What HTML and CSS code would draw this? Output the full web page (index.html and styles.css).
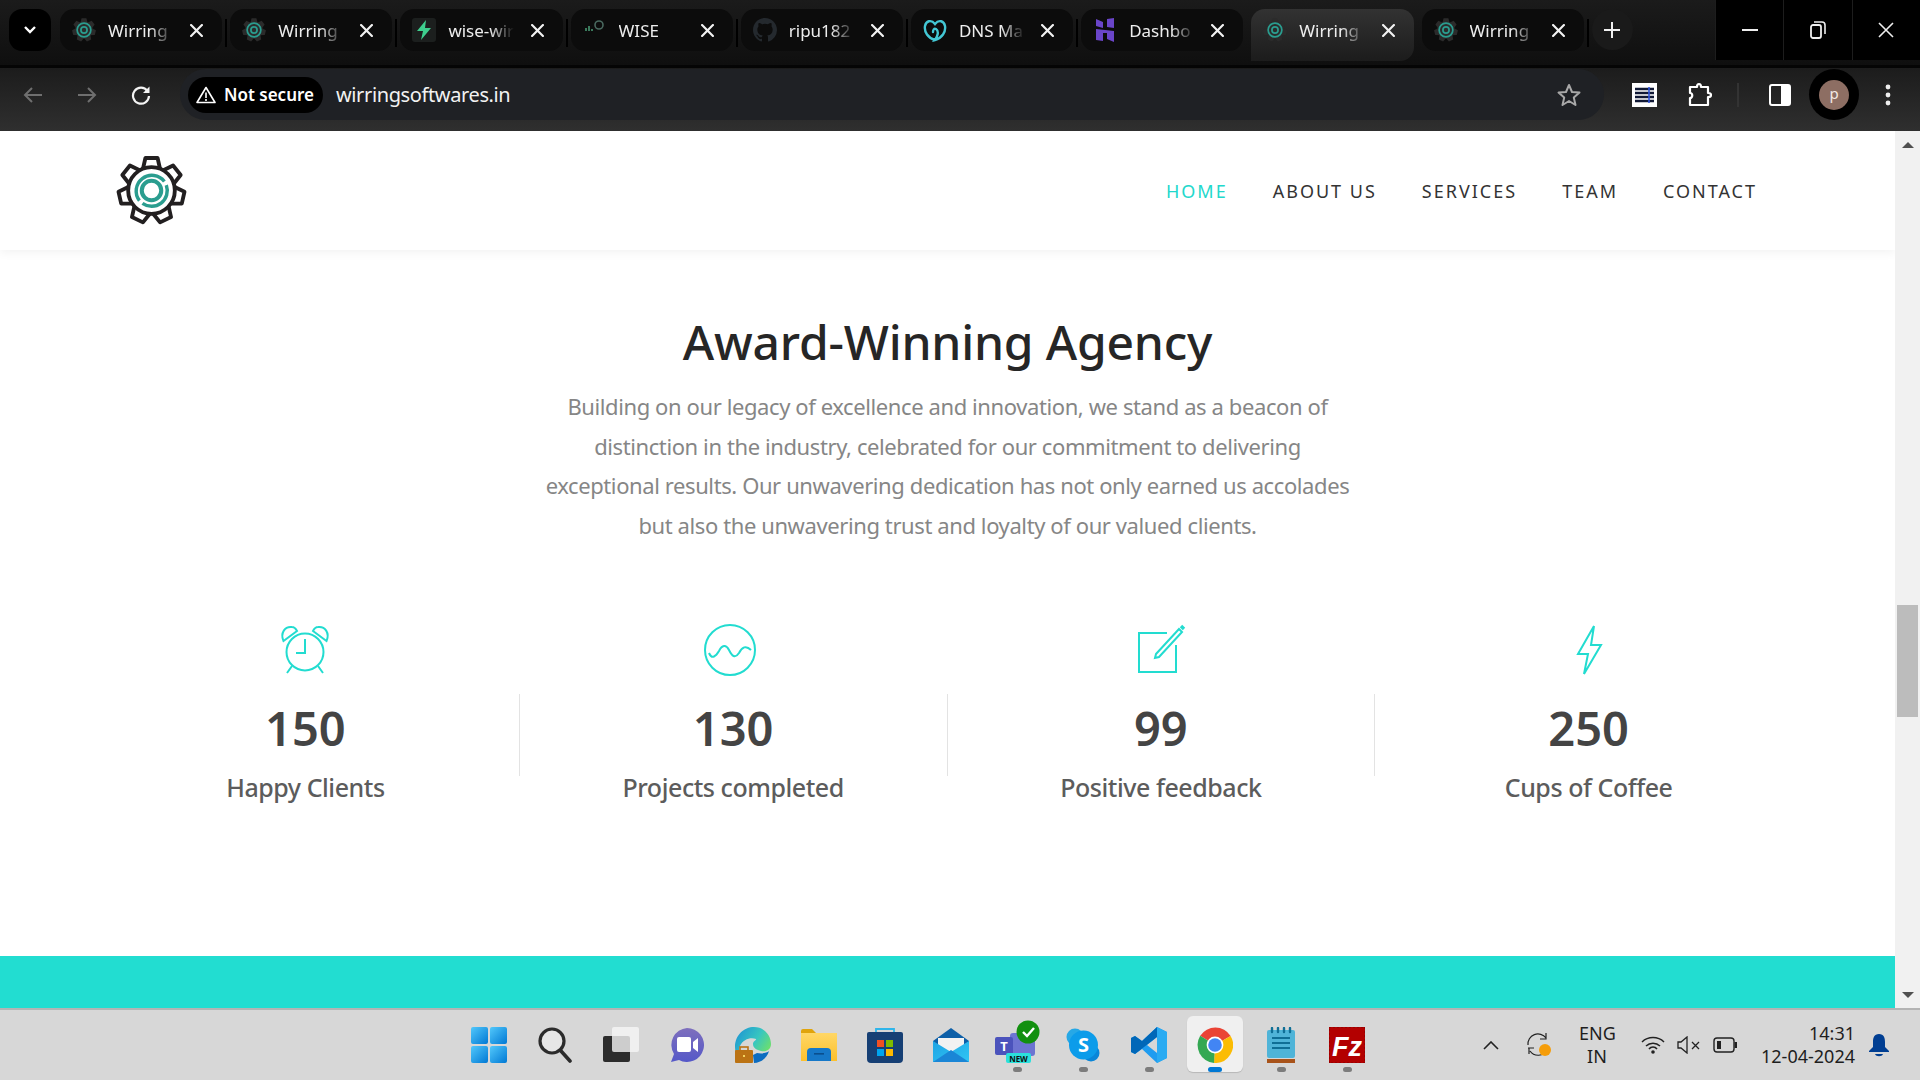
FILE: index.html
```html
<!DOCTYPE html>
<html lang="en">
<head>
    <meta charset="UTF-8">
    <title>Wirring Softwares</title>
    <link rel="stylesheet" href="styles.css">
</head>
<body>
    <svg class="defs" width="0" height="0" aria-hidden="true">
        <defs>
            <symbol id="gear" viewBox="0 0 70 70">
                <g fill="none" stroke="#221f20" stroke-width="3.8" stroke-linejoin="round">
                    <path id="tooth" d="M26.5 14 L29 3 H41 L43.5 14 Z"/>
                    <use href="#tooth" transform="rotate(51.43 35 35)"/>
                    <use href="#tooth" transform="rotate(102.86 35 35)"/>
                    <use href="#tooth" transform="rotate(154.29 35 35)"/>
                    <use href="#tooth" transform="rotate(205.71 35 35)"/>
                    <use href="#tooth" transform="rotate(257.14 35 35)"/>
                    <use href="#tooth" transform="rotate(308.57 35 35)"/>
                    <circle cx="35" cy="35" r="23" fill="#fff"/>
                </g>
                <circle cx="35" cy="35" r="9.6" fill="none" stroke="#2a9d8f" stroke-width="4"/>
                <path d="M49.6 29.7 A15.5 15.5 0 0 1 26.1 47.7 M23.1 45 A15.5 15.5 0 1 1 47.7 26.1" fill="none" stroke="#2a9d8f" stroke-width="3.4"/>
            </symbol>
            <symbol id="gear-dim" viewBox="0 0 70 70">
                <g fill="#2b2b2b">
                    <path id="tooth-dim" d="M24 16 L28 1 H42 L46 16 Z"/>
                    <use href="#tooth-dim" transform="rotate(51.43 35 35)"/>
                    <use href="#tooth-dim" transform="rotate(102.86 35 35)"/>
                    <use href="#tooth-dim" transform="rotate(154.29 35 35)"/>
                    <use href="#tooth-dim" transform="rotate(205.71 35 35)"/>
                    <use href="#tooth-dim" transform="rotate(257.14 35 35)"/>
                    <use href="#tooth-dim" transform="rotate(308.57 35 35)"/>
                    <circle cx="35" cy="35" r="25"/>
                </g>
                <circle cx="35" cy="35" r="20" fill="none" stroke="#2a9d8f" stroke-width="5"/>
                <circle cx="35" cy="35" r="9" fill="none" stroke="#2a9d8f" stroke-width="5"/>
            </symbol>
            <symbol id="close" viewBox="0 0 12 12">
                <path d="M1 1 L11 11 M11 1 L1 11" stroke="#f2f2f2" stroke-width="2" stroke-linecap="round"/>
            </symbol>
            <linearGradient id="win-grad" x1="0" y1="0" x2="1" y2="1">
                <stop offset="0" stop-color="#52c8fb"/>
                <stop offset="1" stop-color="#0078d4"/>
            </linearGradient>
            <linearGradient id="meet-grad" x1="0" y1="0" x2="0" y2="1">
                <stop offset="0" stop-color="#7e6fbd"/>
                <stop offset="1" stop-color="#5558c8"/>
            </linearGradient>
            <linearGradient id="edge-grad" x1="0" y1="0" x2="1" y2="0.6">
                <stop offset="0" stop-color="#1a8fd6"/>
                <stop offset="0.6" stop-color="#38c6c0"/>
                <stop offset="1" stop-color="#6fe06a"/>
            </linearGradient>
            <linearGradient id="folder-grad" x1="0" y1="0" x2="0" y2="1">
                <stop offset="0" stop-color="#ffd766"/>
                <stop offset="1" stop-color="#fcc02c"/>
            </linearGradient>
            <linearGradient id="mail-grad" x1="0" y1="0" x2="1" y2="1">
                <stop offset="0" stop-color="#1ea3e4"/>
                <stop offset="1" stop-color="#30c6f4"/>
            </linearGradient>
        </defs>
    </svg>

    <div class="tabstrip">
        <button class="tab-search">
            <svg width="14" height="10" viewBox="0 0 14 10"><path d="M2 2 L7 7 L12 2" fill="none" stroke="#fff" stroke-width="2.4"/></svg>
        </button>
        <div class="tabs">
            <div class="tab"><svg class="favicon"><use href="#gear-dim"/></svg><span class="tab-title">Wirring</span><svg class="tab-close"><use href="#close"/></svg></div>
            <i class="tab-sep"></i>
            <div class="tab"><svg class="favicon"><use href="#gear-dim"/></svg><span class="tab-title">Wirring</span><svg class="tab-close"><use href="#close"/></svg></div>
            <i class="tab-sep"></i>
            <div class="tab">
                <svg class="favicon" viewBox="0 0 24 24"><rect width="24" height="24" rx="3" fill="#1c1f1e"/><path d="M14 2 L5 13 H11 L9 22 L19 10 H13 Z" fill="#3ecf8e"/></svg>
                <span class="tab-title">wise-wir</span><svg class="tab-close"><use href="#close"/></svg>
            </div>
            <i class="tab-sep"></i>
            <div class="tab">
                <svg class="favicon" viewBox="0 0 24 24"><path d="M3 10 V13 M6 8 V13 M9 11 V13" stroke="#3a7a5c" stroke-width="2"/><circle cx="16" cy="7" r="4" fill="none" stroke="#4a6a60" stroke-width="1.6"/></svg>
                <span class="tab-title">WISE</span><svg class="tab-close"><use href="#close"/></svg>
            </div>
            <i class="tab-sep"></i>
            <div class="tab">
                <svg class="favicon" viewBox="0 0 16 16"><path fill="#24292e" d="M8 0C3.58 0 0 3.58 0 8c0 3.54 2.29 6.53 5.47 7.59.4.07.55-.17.55-.38v-1.34c-2.23.48-2.7-1.07-2.7-1.07-.36-.93-.89-1.17-.89-1.17-.73-.5.05-.49.05-.49.8.06 1.23.83 1.23.83.71 1.23 1.87.87 2.33.66.07-.52.28-.87.5-1.07-1.78-.2-3.64-.89-3.64-3.95 0-.87.31-1.59.82-2.15-.08-.2-.36-1.02.08-2.12 0 0 .67-.21 2.2.82a7.6 7.6 0 0 1 4 0c1.53-1.04 2.2-.82 2.2-.82.44 1.1.16 1.92.08 2.12.51.56.82 1.27.82 2.15 0 3.07-1.87 3.75-3.65 3.95.29.25.54.73.54 1.48v2.2c0 .21.15.46.55.38A8 8 0 0 0 16 8c0-4.42-3.58-8-8-8z"/></svg>
                <span class="tab-title">ripu182</span><svg class="tab-close"><use href="#close"/></svg>
            </div>
            <i class="tab-sep"></i>
            <div class="tab">
                <svg class="favicon" viewBox="0 0 24 24"><path d="M12 22 C5 20 1 14 2 8 C3 3 8 1 12 6 C16 1 21 3 22 8 C23 14 19 20 12 22 C15 18 16 13 13 11 C11 10 10 12 10 14" fill="none" stroke="#43c7d4" stroke-width="2.4" stroke-linecap="round"/></svg>
                <span class="tab-title">DNS Ma</span><svg class="tab-close"><use href="#close"/></svg>
            </div>
            <i class="tab-sep"></i>
            <div class="tab">
                <svg class="favicon" viewBox="0 0 24 24"><path d="M3 1 L10 4 V10 L3 8 Z M14 1 L21 0 V10 L14 9 Z M3 11 L21 13 V24 L14 21 V15 H10 V23 L3 22 Z" fill="#6a45c9"/></svg>
                <span class="tab-title">Dashbo</span><svg class="tab-close"><use href="#close"/></svg>
            </div>
            <i class="tab-sep tab-sep-hidden"></i>
            <div class="tab tab-active"><svg class="favicon"><use href="#gear-dim"/></svg><span class="tab-title">Wirring</span><svg class="tab-close"><use href="#close"/></svg></div>
            <i class="tab-sep tab-sep-hidden"></i>
            <div class="tab"><svg class="favicon"><use href="#gear-dim"/></svg><span class="tab-title">Wirring</span><svg class="tab-close"><use href="#close"/></svg></div>
            <i class="tab-sep"></i>
            <button class="tab-new">
                <svg width="16" height="16" viewBox="0 0 16 16"><path d="M8 0 V16 M0 8 H16" stroke="#f0f0f0" stroke-width="2"/></svg>
            </button>
        </div>
        <div class="window-controls">
            <div class="win-btn"><svg width="16" height="2" viewBox="0 0 16 2"><rect width="16" height="2" fill="#eee"/></svg></div>
            <div class="win-btn"><svg width="16" height="18" viewBox="0 0 16 18"><rect x="1" y="4" width="10" height="13" rx="2" fill="none" stroke="#eee" stroke-width="1.8"/><path d="M4 1 H12 Q15 1 15 4 V13" fill="none" stroke="#eee" stroke-width="1.6"/></svg></div>
            <div class="win-btn"><svg width="16" height="16" viewBox="0 0 16 16"><path d="M1 1 L15 15 M15 1 L1 15" stroke="#eee" stroke-width="1.6"/></svg></div>
        </div>
    </div>

    <div class="toolbar">
        <div class="nav-btn"><svg width="20" height="18" viewBox="0 0 20 18"><path d="M19 9 H2 M9 2 L2 9 L9 16" fill="none" stroke="#6f6f6f" stroke-width="2"/></svg></div>
        <div class="nav-btn"><svg width="20" height="18" viewBox="0 0 20 18"><path d="M1 9 H18 M11 2 L18 9 L11 16" fill="none" stroke="#6f6f6f" stroke-width="2"/></svg></div>
        <div class="nav-btn"><svg width="20" height="20" viewBox="0 0 20 20"><path d="M16.5 6 A8 8 0 1 0 18 11" fill="none" stroke="#f4f4f4" stroke-width="2.2"/><path d="M18.5 1.5 V8 H12 Z" fill="#f4f4f4"/></svg></div>
        <div class="omnibox">
            <div class="not-secure">
                <svg width="20" height="18" viewBox="0 0 20 18"><path d="M10 1.5 L19 16.5 H1 Z" fill="none" stroke="#fff" stroke-width="1.6" stroke-linejoin="round"/><path d="M10 6.5 V12 M10 13 V15" stroke="#fff" stroke-width="1.6"/></svg>
                <span>Not secure</span>
            </div>
            <span class="url">wirringsoftwares.in</span>
            <svg class="star" width="24" height="24" viewBox="0 0 24 24"><path d="M12 2 L15 9 L22.5 9.6 L16.8 14.6 L18.5 22 L12 18 L5.5 22 L7.2 14.6 L1.5 9.6 L9 9 Z" fill="none" stroke="#a8a8a8" stroke-width="2" stroke-linejoin="round"/></svg>
        </div>
        <div class="toolbar-icons">
            <svg class="ext-list" width="25" height="24" viewBox="0 0 25 24">
                <rect width="25" height="24" fill="#fff"/>
                <path d="M3 6 H22 M3 10 H22 M3 14 H22 M3 18 H22" stroke="#111936" stroke-width="2.4"/>
                <path d="M17 4 V20" stroke="#2f55e0" stroke-width="1.6"/>
            </svg>
            <svg class="ext-puzzle" width="25" height="26" viewBox="0 0 25 26">
                <path d="M3 5 H10 C10 1 14 1 14 5 H21 V11 C25 11 25 15 21 15 V23 H3 V16 C6 16 6 11 3 11 Z" fill="none" stroke="#fff" stroke-width="2.2" stroke-linejoin="round"/>
            </svg>
            <i class="toolbar-sep"></i>
            <svg class="side-panel" width="22" height="22" viewBox="0 0 22 22">
                <rect x="1" y="1" width="20" height="20" rx="2" fill="none" stroke="#fff" stroke-width="2"/>
                <rect x="12" y="1" width="9" height="20" fill="#fff"/>
            </svg>
            <div class="avatar-wrap"><div class="avatar">p</div></div>
            <svg class="kebab" width="6" height="22" viewBox="0 0 6 22">
                <circle cx="3" cy="3" r="2.4" fill="#eee"/><circle cx="3" cy="11" r="2.4" fill="#eee"/><circle cx="3" cy="19" r="2.4" fill="#eee"/>
            </svg>
        </div>
    </div>

    <div class="viewport">
        <div class="page">
            <header class="site-header">
                <svg class="logo" width="71" height="71"><use href="#gear"/></svg>
                <nav class="site-nav">
                    <a class="nav-active">HOME</a>
                    <a>ABOUT US</a>
                    <a>SERVICES</a>
                    <a>TEAM</a>
                    <a>CONTACT</a>
                </nav>
            </header>

            <section class="intro">
                <h1>Award-Winning Agency</h1>
                <p>Building on our legacy of excellence and innovation, we stand as a beacon of distinction in the industry, celebrated for our commitment to delivering exceptional results. Our unwavering dedication has not only earned us accolades but also the unwavering trust and loyalty of our valued clients.</p>
            </section>

            <section class="stats">
                <div class="stat">
                    <svg class="stat-icon" viewBox="0 0 52 52">
                        <circle cx="26" cy="28" r="18.5"/>
                        <path d="M26 15 V29 H17"/>
                        <path d="M4.5 17 C1 9 6 2 13 3 C15 3 17 5 18 7 Z"/>
                        <path d="M47.5 17 C51 9 46 2 39 3 C37 3 35 5 34 7 Z"/>
                        <path d="M13 42 L8 49 M39 42 L44 49"/>
                    </svg>
                    <div class="stat-num">150</div>
                    <div class="stat-label">Happy Clients</div>
                </div>
                <i class="stat-divider"></i>
                <div class="stat">
                    <svg class="stat-icon stat-icon-shift" viewBox="0 0 52 52">
                        <circle cx="26" cy="26" r="25"/>
                        <path d="M5 29 C8 36 12 32 15 27 C18 21 22 20 25 26 C28 32 31 35 35 29 C38 23 42 21 47 26"/>
                    </svg>
                    <div class="stat-num">130</div>
                    <div class="stat-label">Projects completed</div>
                </div>
                <i class="stat-divider"></i>
                <div class="stat">
                    <svg class="stat-icon" viewBox="0 0 52 52">
                        <path d="M32 9 H4 V48 H41 V21"/>
                        <path d="M21 30 L44 5 L47 8 L24 33 L20 34 Z"/>
                        <path d="M46 2 L49 5" stroke-width="3.4"/>
                    </svg>
                    <div class="stat-num">99</div>
                    <div class="stat-label">Positive feedback</div>
                </div>
                <i class="stat-divider"></i>
                <div class="stat">
                    <svg class="stat-icon" viewBox="0 0 52 52">
                        <path d="M31 2 L15 30 H25 L21 50 L38 21 H28 Z"/>
                    </svg>
                    <div class="stat-num">250</div>
                    <div class="stat-label">Cups of Coffee</div>
                </div>
            </section>

            <div class="band"></div>
        </div>
        <div class="scrollbar">
            <span class="arrow-up"></span>
            <div class="track"><div class="thumb"></div></div>
            <span class="arrow-down"></span>
        </div>
    </div>

    <footer class="taskbar">
        <div class="task-icons">
            <div class="task-item">
                <svg width="36" height="36" viewBox="0 0 36 36"><rect x="0" y="0" width="17" height="17" rx="2" fill="url(#win-grad)"/><rect x="19" y="0" width="17" height="17" rx="2" fill="url(#win-grad)"/><rect x="0" y="19" width="17" height="17" rx="2" fill="url(#win-grad)"/><rect x="19" y="19" width="17" height="17" rx="2" fill="url(#win-grad)"/></svg>
            </div>
            <div class="task-item">
                <svg width="34" height="36" viewBox="0 0 34 36"><circle cx="14" cy="14" r="12" fill="#e6e6e6" stroke="#2b2b2b" stroke-width="3.2"/><path d="M23 24 L32 34" stroke="#2b2b2b" stroke-width="3.6" stroke-linecap="round"/></svg>
            </div>
            <div class="task-item">
                <svg width="36" height="36" viewBox="0 0 36 36"><rect x="0" y="9" width="27" height="26" rx="2" fill="#2c2c2c"/><rect x="9" y="0" width="27" height="25" rx="2" fill="#f6f6f6" fill-opacity=".8"/></svg>
            </div>
            <div class="task-item">
                <svg width="34" height="36" viewBox="0 0 34 36"><path d="M17 1 A17 17 0 1 1 9 33 L1 35 L4 27 A17 17 0 0 1 17 1 Z" fill="url(#meet-grad)"/><rect x="7" y="10" width="14" height="15" rx="2" fill="#fff"/><path d="M23 15 L28 11 V25 L23 21 Z" fill="#fff"/></svg>
            </div>
            <div class="task-item">
                <svg width="36" height="36" viewBox="0 0 36 36"><path d="M0 20 C0 8 9 0 19 0 C29 0 36 8 36 17 C36 23 31 25 26 24 C22 23 18 21 18 17 C18 14 22 13 21 12 C16 10 8 12 5 19 C3 24 4 30 8 34 C3 31 0 26 0 20 Z" fill="url(#edge-grad)"/><path d="M22 26 C27 27 32 26 34 24 C32 31 26 36 19 36 L18 28 Z" fill="#0c6cc0"/><rect x="0" y="23" width="18" height="13" rx="1" fill="#bb7314"/><rect x="5" y="20" width="8" height="4" fill="none" stroke="#bb7314" stroke-width="1.6"/><rect x="8" y="28" width="2" height="2" fill="#f4d35e"/></svg>
            </div>
            <div class="task-item">
                <svg width="36" height="32" viewBox="0 0 36 32"><path d="M0 2 Q0 0 2 0 H11 L15 4 H36 V10 H0 Z" fill="#e0a40c"/><rect x="0" y="4" width="36" height="28" fill="url(#folder-grad)"/><path d="M6 32 V23 Q6 19 10 19 H26 Q30 19 30 23 V32 Z" fill="#1678c8"/><rect x="13" y="24" width="10" height="1.6" fill="#0a4f8e"/></svg>
            </div>
            <div class="task-item">
                <svg width="36" height="36" viewBox="0 0 36 36"><path d="M9 6 V2 H27 V6" fill="none" stroke="#2fb5ea" stroke-width="1.8"/><path d="M0 7 Q0 5 2 5 H34 Q36 5 36 7 V32 Q36 36 32 36 H4 Q0 36 0 32 Z" fill="#163f74"/><rect x="10" y="13" width="7" height="7" fill="#f25022"/><rect x="19" y="13" width="7" height="7" fill="#7fba00"/><rect x="10" y="22" width="7" height="7" fill="#00a4ef"/><rect x="19" y="22" width="7" height="7" fill="#ffb900"/></svg>
            </div>
            <div class="task-item">
                <svg width="36" height="34" viewBox="0 0 36 34"><path d="M18 0 L36 13 V34 H0 V13 Z" fill="#0d5fa8"/><path d="M5 10 H31 V20 L18 27 L5 20 Z" fill="#f2f2f2"/><path d="M0 13 L18 24 L36 13 V34 H0 Z" fill="url(#mail-grad)"/><path d="M0 34 L18 22 L36 34 Z" fill="#1a86d6"/></svg>
            </div>
            <div class="task-item has-dot">
                <svg class="teams" width="46" height="46" viewBox="0 0 46 46"><circle cx="31" cy="17" r="6" fill="#7b83d8"/><rect x="16" y="13" width="25" height="23" rx="3" fill="#6d74d2"/><rect x="1" y="17" width="18" height="18" rx="2" fill="#4b53bc"/><text x="10" y="31" class="teams-t">T</text><circle cx="34" cy="12" r="11.5" fill="#12900f"/><path d="M29 12 L33 16 L40 8" fill="none" stroke="#fff" stroke-width="2.4"/><rect x="12" y="33" width="25" height="10" rx="2" fill="#2ae0dc"/><text x="24.5" y="41.5" class="teams-new">NEW</text></svg>
                <i class="task-dot"></i>
            </div>
            <div class="task-item has-dot">
                <svg width="34" height="34" viewBox="0 0 34 34"><circle cx="9" cy="9" r="8.5" fill="#26a8e6"/><circle cx="25" cy="25" r="8.5" fill="#0a86d8"/><circle cx="17.5" cy="17" r="14.5" fill="#0c9cea"/><text x="17.5" y="24" class="skype-s">S</text></svg>
                <i class="task-dot"></i>
            </div>
            <div class="task-item has-dot">
                <svg width="36" height="36" viewBox="0 0 36 36"><path d="M26 0 L36 5 V31 L26 36 L11 22 L4 27 L0 25 V11 L4 9 L11 14 Z M26 10 L16 18 L26 26 Z" fill="#1f9cf0" fill-rule="evenodd"/><path d="M26 0 L11 14 L4 9 L0 11 V25 L4 27 L26 10 Z" fill="#0067b8"/><path d="M26 0 L36 5 V31 L26 36 Z" fill="#2aabf2"/></svg>
                <i class="task-dot"></i>
            </div>
            <div class="task-item task-item-active">
                <svg width="36" height="36" viewBox="0 0 36 36">
                    <path d="M18 18 L3.2 8.7 A18 18 0 0 1 33.6 9 Z" fill="#ea4335"/>
                    <path d="M18 18 L33.6 9 A18 18 0 0 1 17 36 Z" fill="#fbbc04"/>
                    <path d="M18 18 L17 36 A18 18 0 0 1 3.2 8.7 Z" fill="#34a853"/>
                    <circle cx="18" cy="18" r="8.4" fill="#fff"/><circle cx="18" cy="18" r="6.8" fill="#4285f4"/>
                </svg>
                <i class="task-dot task-dot-active"></i>
            </div>
            <div class="task-item has-dot">
                <svg width="28" height="36" viewBox="0 0 28 36"><rect x="0" y="3" width="28" height="28" rx="2" fill="#4fb4d8"/><path d="M0 32 H28 V36 H0 Z" fill="#a8531a"/><path d="M5 11 H23 M5 16 H23 M5 21 H23" stroke="#0f6f96" stroke-width="2"/><path d="M5 1 V5 M11 1 V5 M17 1 V5 M23 1 V5" stroke="#0f6f96" stroke-width="2.4" stroke-linecap="round"/></svg>
                <i class="task-dot"></i>
            </div>
            <div class="task-item has-dot">
                <svg width="36" height="36" viewBox="0 0 36 36"><rect width="36" height="36" fill="#b30000" stroke="#7a0000" stroke-dasharray="2 2"/><text x="18" y="29" class="fz">Fz</text></svg>
                <i class="task-dot"></i>
            </div>
        </div>

        <div class="tray">
            <svg class="tray-chevron" width="16" height="9" viewBox="0 0 16 9"><path d="M1 8 L8 1 L15 8" fill="none" stroke="#222" stroke-width="1.6"/></svg>
            <svg class="tray-sync" width="24" height="26" viewBox="0 0 24 26">
                <path d="M1 13 A10 10 0 0 1 19 6 M19 1 V7 H13 M20 18 A10 10 0 0 1 3 19 M1 16 H7 M2 16 V22" fill="none" stroke="#222" stroke-width="1.2"/>
                <circle cx="18" cy="18" r="6" fill="#f59d0a"/>
            </svg>
            <div class="tray-lang">ENG<br>IN</div>
            <svg class="tray-wifi" width="24" height="18" viewBox="0 0 24 18"><path d="M1 6 A16 16 0 0 1 23 6 M5 10 A10 10 0 0 1 19 10 M8 13 A5 5 0 0 1 16 13" fill="none" stroke="#222" stroke-width="1.5"/><circle cx="12" cy="16" r="1.8" fill="#222"/></svg>
            <svg class="tray-sound" width="23" height="18" viewBox="0 0 23 18"><path d="M1 6 H4 L10 1 V17 L4 12 H1 Z" fill="none" stroke="#222" stroke-width="1.3"/><path d="M15 6 L22 13 M22 6 L15 13" stroke="#222" stroke-width="1.3"/></svg>
            <svg class="tray-battery" width="24" height="16" viewBox="0 0 24 16"><rect x="1" y="1" width="20" height="14" rx="3" fill="none" stroke="#222" stroke-width="1.4"/><rect x="4" y="4" width="4" height="8" fill="#222"/><rect x="21.5" y="5" width="2.5" height="6" fill="#222"/></svg>
            <div class="tray-clock"><span>14:31</span><span>12-04-2024</span></div>
            <svg class="tray-bell" width="20" height="24" viewBox="0 0 20 24"><path d="M10 1 C5 1 4 5 4 9 V14 L0 18 V19 H20 V18 L16 14 V9 C16 5 15 1 10 1 Z" fill="#003e92"/><path d="M6 21 H14 C13 24 7 24 6 21 Z" fill="#003e92"/></svg>
        </div>
    </footer>
</body>
</html>
```

FILE: styles.css
```css
* {
    box-sizing: border-box;
}
html, body {
    margin: 0;
    padding: 0;
    height: 100%;
    overflow: hidden;
}
body {
    width: 1920px;
    height: 1080px;
    display: flex;
    flex-direction: column;
    font-family: "Noto Sans", sans-serif;
    background-color: #fff;
}
.defs {
    display: block;
    height: 0;
}
button {
    border: none;
    padding: 0;
    display: flex;
    align-items: center;
    justify-content: center;
}

/* tab strip */
.tabstrip {
    height: 65px;
    flex-shrink: 0;
    display: flex;
    background: linear-gradient(#1b1b1b, #0f0f0f);
}
.tab-search {
    width: 42px;
    height: 42px;
    margin: 9px 0 0 9px;
    border-radius: 13px;
    background-color: #000;
}
.tabs {
    display: flex;
    align-items: flex-start;
    margin-left: 9px;
    padding-top: 9px;
    flex: 1;
}
.tab {
    width: 162.2px;
    height: 42px;
    flex-shrink: 0;
    padding: 0 19px 0 12px;
    display: flex;
    align-items: center;
    border-radius: 14px;
    background-color: #0c0c0c;
    color: #eee;
}
.tab-active {
    height: 52px;
    padding-bottom: 10px;
    background: linear-gradient(#323232, #1c1c1c);
    border-radius: 14px 14px 14px 0;
}
.favicon {
    width: 24px;
    height: 24px;
    flex-shrink: 0;
}
.tab-title {
    flex: 1;
    margin-left: 12px;
    font-size: 17px;
    white-space: nowrap;
    -webkit-mask-image: linear-gradient(90deg, #000 42px, transparent 66px);
    mask-image: linear-gradient(90deg, #000 42px, transparent 66px);
}
.tab-close {
    width: 13px;
    height: 13px;
    flex-shrink: 0;
}
.tab-sep {
    width: 2px;
    height: 28px;
    margin: 10px 3px 0;
    flex-shrink: 0;
    background-color: #000;
}
.tab-sep-hidden {
    background-color: transparent;
}
.tab-new {
    width: 41px;
    height: 41px;
    border-radius: 50%;
    background-color: #1a1a1a;
}
.window-controls {
    display: flex;
    height: 60px;
    width: 205px;
    background-color: #000;
}
.win-btn {
    flex: 1;
    display: flex;
    align-items: center;
    justify-content: center;
    border-left: 1px solid #1d1d1d;
}

/* address bar */
.toolbar {
    height: 66px;
    flex-shrink: 0;
    display: flex;
    align-items: flex-start;
    padding: 1px 0 0 6px;
    border-top: 3px solid #050505;
    background: linear-gradient(#1c1c1c, #2f2f2f);
}
.nav-btn {
    width: 54px;
    height: 51px;
    display: flex;
    align-items: center;
    justify-content: center;
}
.omnibox {
    width: 1424px;
    height: 51px;
    margin-left: 12px;
    padding: 0 23px 0 8px;
    display: flex;
    align-items: center;
    border-radius: 26px;
    background-color: #1f2125;
}
.not-secure {
    height: 36px;
    width: 135px;
    padding-left: 8px;
    display: flex;
    align-items: center;
    gap: 8px;
    border-radius: 18px;
    background-color: #000;
    color: #fff;
    font-size: 17px;
    font-weight: 600;
    white-space: nowrap;
}
.url {
    margin-left: 13px;
    color: #f2f2f2;
    font-size: 20px;
    letter-spacing: -0.38px;
}
.star {
    margin-left: auto;
}
.toolbar-icons {
    flex: 1;
    height: 51px;
    display: flex;
    align-items: center;
    padding-left: 28px;
}
.ext-puzzle {
    margin-left: 30px;
}
.toolbar-sep {
    width: 2px;
    height: 24px;
    margin-left: 25px;
    background-color: #333;
}
.side-panel {
    margin-left: 30px;
}
.avatar-wrap {
    width: 50px;
    height: 51px;
    margin-left: 18px;
    display: flex;
    align-items: center;
    justify-content: center;
    border-radius: 50%;
    background-color: #000;
}
.avatar {
    width: 30px;
    height: 30px;
    border-radius: 50%;
    background-color: #8d6e63;
    color: #f3e9e4;
    font-size: 15px;
    line-height: 27px;
    text-align: center;
}
.kebab {
    margin-left: 26px;
}

/* page */
.viewport {
    height: 877px;
    flex-shrink: 0;
    display: flex;
    overflow: hidden;
}
.page {
    flex: 1;
    display: flex;
    flex-direction: column;
    background-color: #fff;
}
.site-header {
    height: 119px;
    flex-shrink: 0;
    display: flex;
    align-items: center;
    justify-content: space-between;
    padding: 0 138px 0 116px;
    box-shadow: 0 2px 10px rgba(0, 0, 0, 0.06);
}
.site-nav {
    display: flex;
    gap: 45px;
    font-size: 18px;
    letter-spacing: 2px;
    color: #333;
}
.nav-active {
    color: #22d8cc;
}
.intro {
    width: 820px;
    margin: 0 auto;
    padding-top: 62px;
    text-align: center;
}
.intro h1 {
    margin: 0;
    font-size: 48px;
    font-weight: 500;
    line-height: 60px;
    letter-spacing: -0.2px;
    color: #262626;
}
.intro p {
    margin: 15px 0 0;
    font-size: 22px;
    line-height: 39.6px;
    letter-spacing: -0.4px;
    color: #868686;
}
.stats {
    display: grid;
    grid-template-columns: 1fr 1px 1fr 1px 1fr 1px 1fr;
    margin: 79px 93px 0 92px;
}
.stat {
    display: flex;
    flex-direction: column;
    align-items: center;
}
.stat-icon {
    width: 52px;
    height: 52px;
    fill: none;
    stroke: #22dcd0;
    stroke-width: 2;
}
.stat-icon-shift {
    margin-right: 6px;
}
.stat-num {
    margin-top: 22px;
    font-size: 47px;
    line-height: 60px;
    font-weight: 600;
    color: #444;
}
.stat-label {
    margin-top: 7px;
    font-size: 25px;
    line-height: 44px;
    font-weight: 500;
    letter-spacing: -0.45px;
    color: #5c5c5c;
}
.stat-divider {
    height: 82px;
    margin-top: 70px;
    background-color: #e3e3e3;
}
.band {
    height: 52px;
    margin-top: auto;
    flex-shrink: 0;
    background-color: #22ddd1;
}

/* scrollbar */
.scrollbar {
    width: 25px;
    flex-shrink: 0;
    display: flex;
    flex-direction: column;
    align-items: center;
    padding: 11px 0 10px;
    background-color: #f1f1f1;
}
.arrow-up, .arrow-down {
    width: 0;
    height: 0;
    border-left: 6px solid transparent;
    border-right: 6px solid transparent;
}
.arrow-up {
    border-bottom: 6px solid #505050;
}
.arrow-down {
    border-top: 6px solid #505050;
}
.track {
    flex: 1;
    width: 100%;
    padding: 457px 2px 0;
}
.thumb {
    height: 112px;
    background-color: #bcbcbc;
}

/* windows taskbar */
.taskbar {
    flex: 1;
    display: flex;
    padding-left: 456px;
    border-top: 2px solid #b4b4b4;
    background-color: #d7d7d7;
    color: #1e1e1e;
}
.task-icons {
    display: flex;
    width: 924px;
}
.task-item {
    width: 66px;
    height: 70px;
    display: flex;
    flex-direction: column;
    align-items: center;
    justify-content: center;
    position: relative;
}
.task-item-active::before {
    content: "";
    position: absolute;
    left: 5px;
    right: 5px;
    top: 6px;
    bottom: 8px;
    border-radius: 6px;
    background-color: #f0f0f0;
    box-shadow: 0 1px 1px rgba(0, 0, 0, 0.15);
}
.task-item-active svg {
    position: relative;
}
.task-dot {
    position: absolute;
    left: 29px;
    bottom: 8px;
    width: 9px;
    height: 5px;
    border-radius: 3px;
    background-color: #7c7c7c;
}
.task-dot-active {
    left: 26px;
    width: 14px;
    background-color: #0078d4;
}
.teams {
    margin-top: -5px;
}
.teams-t {
    font-family: "Noto Sans", sans-serif;
    font-size: 13px;
    font-weight: 700;
    fill: #fff;
    text-anchor: middle;
}
.teams-new {
    font-family: "Noto Sans", sans-serif;
    font-size: 8px;
    font-weight: 700;
    fill: #111;
    text-anchor: middle;
}
.skype-s {
    font-family: "Noto Sans", sans-serif;
    font-size: 20px;
    font-weight: 700;
    fill: #fff;
    text-anchor: middle;
}
.fz {
    font-family: "Liberation Sans", sans-serif;
    font-size: 27px;
    font-weight: 700;
    font-style: italic;
    fill: #fff;
    text-anchor: middle;
}
.tray {
    flex: 1;
    display: flex;
    align-items: center;
    font-size: 18px;
}
.tray-chevron {
    margin-left: 103px;
}
.tray-sync {
    margin-left: 28px;
}
.tray-lang {
    width: 36px;
    margin-left: 28px;
    line-height: 23px;
    text-align: center;
}
.tray-wifi {
    margin-left: 26px;
}
.tray-sound {
    margin-left: 12px;
}
.tray-battery {
    margin-left: 13px;
}
.tray-clock {
    width: 95px;
    margin-left: 23px;
    display: flex;
    flex-direction: column;
    align-items: flex-end;
    line-height: 23px;
    white-space: nowrap;
}
.tray-bell {
    margin-left: 14px;
}
```
